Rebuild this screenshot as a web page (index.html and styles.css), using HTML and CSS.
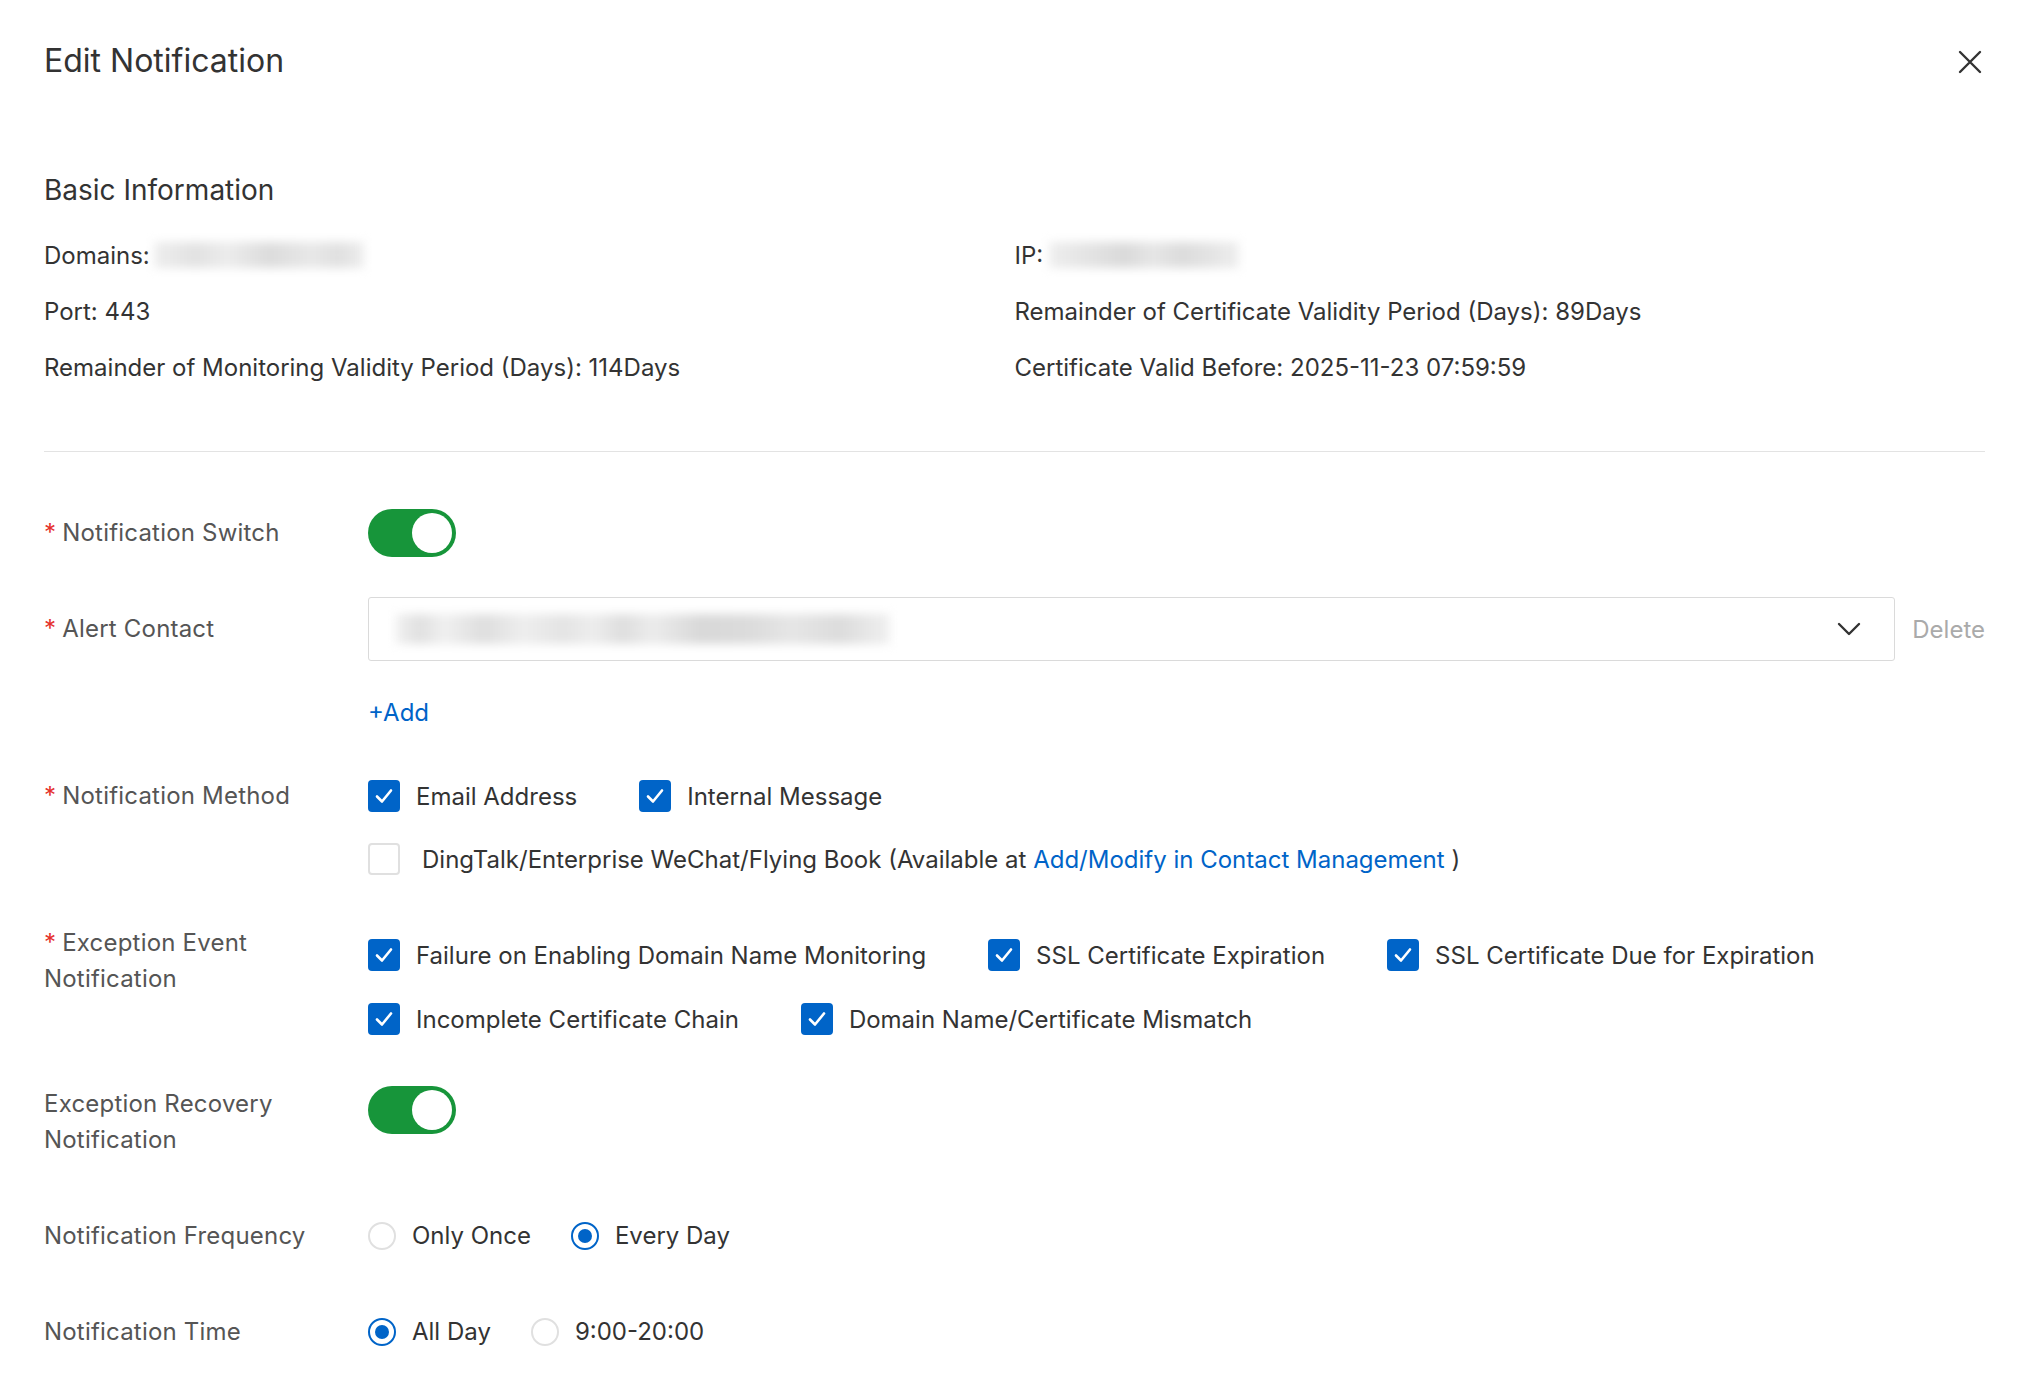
FILE: index.html
```html
<!DOCTYPE html>
<html lang="en">
<head>
<meta charset="utf-8">
<title>Edit Notification</title>
<link rel="stylesheet" href="styles.css">
</head>
<body>
<div class="dialog">
  <header class="head">
    <h1 class="title">Edit Notification</h1>
    <button class="close" type="button" aria-label="Close">
      <svg width="24" height="24" viewBox="0 0 24 24"><path d="M2 2 L22 22 M22 2 L2 22" stroke="#333" stroke-width="2.4" fill="none" stroke-linecap="round"/></svg>
    </button>
  </header>

  <h2 class="section">Basic Information</h2>
  <div class="info">
    <div class="info-item">Domains:<span class="blur blur-domain"></span></div>
    <div class="info-item">IP:<span class="blur blur-ip"></span></div>
    <div class="info-item">Port: 443</div>
    <div class="info-item">Remainder of Certificate Validity Period (Days): 89Days</div>
    <div class="info-item">Remainder of Monitoring Validity Period (Days): 114Days</div>
    <div class="info-item">Certificate Valid Before: 2025-11-23 07:59:59</div>
  </div>
  <hr class="divider">

  <div class="form">
    <div class="row row-switch">
      <div class="label"><span class="star">*</span>Notification Switch</div>
      <div class="control"><span class="switch"><span class="knob"></span></span></div>
    </div>

    <div class="row row-contact">
      <div class="label label-tall"><span class="star">*</span>Alert Contact</div>
      <div class="control control-contact">
        <div class="select">
          <span class="blur blur-contact"></span>
          <svg class="chev" width="24" height="14" viewBox="0 0 24 14"><path d="M2 2 L12 12 L22 2" stroke="#333" stroke-width="2.4" fill="none" stroke-linecap="round" stroke-linejoin="round"/></svg>
        </div>
        <span class="delete">Delete</span>
      </div>
    </div>

    <div class="row row-add">
      <div class="label"></div>
      <div class="control"><span class="link">+Add</span></div>
    </div>

    <div class="row row-method">
      <div class="label"><span class="star">*</span>Notification Method</div>
      <div class="control control-stack">
        <div class="opt-line">
          <span class="opt"><span class="cb on"><svg width="32" height="32" viewBox="0 0 32 32"><path d="M9 16.5 L14 21.5 L23 10.5" stroke="#fff" stroke-width="2.6" fill="none" stroke-linecap="round" stroke-linejoin="round"/></svg></span><span>Email Address</span></span>
          <span class="opt"><span class="cb on"><svg width="32" height="32" viewBox="0 0 32 32"><path d="M9 16.5 L14 21.5 L23 10.5" stroke="#fff" stroke-width="2.6" fill="none" stroke-linecap="round" stroke-linejoin="round"/></svg></span><span>Internal Message</span></span>
        </div>
        <div class="opt-line">
          <span class="opt opt-wide"><span class="cb"></span><span>DingTalk/Enterprise WeChat/Flying Book (Available at <span class="link">Add/Modify in Contact Management</span> )</span></span>
        </div>
      </div>
    </div>

    <div class="row row-exception">
      <div class="label label-multi"><span class="star">*</span>Exception Event<br>Notification</div>
      <div class="control control-stack control-exc">
        <div class="opt-line">
          <span class="opt"><span class="cb on"><svg width="32" height="32" viewBox="0 0 32 32"><path d="M9 16.5 L14 21.5 L23 10.5" stroke="#fff" stroke-width="2.6" fill="none" stroke-linecap="round" stroke-linejoin="round"/></svg></span><span>Failure on Enabling Domain Name Monitoring</span></span>
          <span class="opt"><span class="cb on"><svg width="32" height="32" viewBox="0 0 32 32"><path d="M9 16.5 L14 21.5 L23 10.5" stroke="#fff" stroke-width="2.6" fill="none" stroke-linecap="round" stroke-linejoin="round"/></svg></span><span>SSL Certificate Expiration</span></span>
          <span class="opt"><span class="cb on"><svg width="32" height="32" viewBox="0 0 32 32"><path d="M9 16.5 L14 21.5 L23 10.5" stroke="#fff" stroke-width="2.6" fill="none" stroke-linecap="round" stroke-linejoin="round"/></svg></span><span>SSL Certificate Due for Expiration</span></span>
        </div>
        <div class="opt-line">
          <span class="opt"><span class="cb on"><svg width="32" height="32" viewBox="0 0 32 32"><path d="M9 16.5 L14 21.5 L23 10.5" stroke="#fff" stroke-width="2.6" fill="none" stroke-linecap="round" stroke-linejoin="round"/></svg></span><span>Incomplete Certificate Chain</span></span>
          <span class="opt"><span class="cb on"><svg width="32" height="32" viewBox="0 0 32 32"><path d="M9 16.5 L14 21.5 L23 10.5" stroke="#fff" stroke-width="2.6" fill="none" stroke-linecap="round" stroke-linejoin="round"/></svg></span><span>Domain Name/Certificate Mismatch</span></span>
        </div>
      </div>
    </div>

    <div class="row row-recovery">
      <div class="label label-multi">Exception Recovery<br>Notification</div>
      <div class="control"><span class="switch"><span class="knob"></span></span></div>
    </div>

    <div class="row row-freq">
      <div class="label">Notification Frequency</div>
      <div class="control">
        <span class="ropt"><span class="radio"></span><span>Only Once</span></span>
        <span class="ropt"><span class="radio on"></span><span>Every Day</span></span>
      </div>
    </div>

    <div class="row row-time">
      <div class="label">Notification Time</div>
      <div class="control">
        <span class="ropt"><span class="radio on"></span><span>All Day</span></span>
        <span class="ropt"><span class="radio"></span><span>9:00-20:00</span></span>
      </div>
    </div>
  </div>
</div>
</body>
</html>
```

FILE: styles.css
```css
* { box-sizing: border-box; }
html, body { margin: 0; padding: 0; background: #fff; }
body {
  font-family: Inter, "Noto Sans", "Liberation Sans", sans-serif;
  color: #333;
  font-size: 24px;
}
.dialog { padding: 0 47px 0 44px; }

.head {
  height: 120px;
  display: flex;
  align-items: center;
  justify-content: space-between;
}
.title { margin: 0; font-size: 32px; font-weight: 400; color: #333; }
.close {
  width: 24px; height: 24px; padding: 0; margin: 4px 3px 0 0;
  border: 0; background: none; display: flex;
}

.section {
  margin: 42px 0 0;
  height: 56px; line-height: 56px;
  font-size: 28px; font-weight: 400; color: #333;
}
.info {
  margin-top: 9px;
  display: grid;
  grid-template-columns: 1fr 1fr;
  grid-auto-rows: 56px;
  align-items: center;
}
.info-item { display: flex; align-items: center; white-space: nowrap; }

.blur {
  display: inline-block;
  filter: blur(5px);
}
.blur-domain {
  width: 210px; height: 26px; margin-left: 4px;
  background: linear-gradient(90deg, #eee 0%, #e2e2e2 20%, #ececec 35%, #dcdcdc 55%, #e8e8e8 75%, #e0e0e0 88%, #eee 100%);
}
.blur-ip {
  width: 190px; height: 26px; margin-left: 6px;
  background: linear-gradient(90deg, #eee 0%, #e4e4e4 20%, #dadada 40%, #e6e6e6 55%, #dcdcdc 70%, #e4e4e4 85%, #eee 100%);
}
.blur-contact {
  width: 495px; height: 30px;
  background: linear-gradient(90deg, #f2f2f2 0%, #e0e0e0 5%, #f0f0f0 10%, #dedede 18%, #eee 26%, #e4e4e4 34%, #ededed 40%, #dedede 46%, #ececec 52%, #d8d8d8 62%, #dcdcdc 72%, #e6e6e6 80%, #dcdcdc 90%, #f0f0f0 100%);
}

.divider {
  margin: 56px 0 0;
  border: 0; border-top: 1px solid #e3e3e3; height: 0;
}

.form { padding-top: 57px; }
.row { display: flex; }
.label {
  width: 324px; flex: none;
  color: #555;
  line-height: 48px;
  white-space: nowrap;
  letter-spacing: 0.2px;
}
.label-tall { line-height: 64px; }
.label-multi { line-height: 36px; }
.star { color: #e5322d; margin-right: 6px; }
.control { flex: 1; display: flex; align-items: center; min-width: 0; }

.row-contact { margin-top: 40px; }
.row-add { margin-top: 36px; }
.row-add .label, .row-add .control { line-height: 32px; height: 32px; }
.row-method { margin-top: 43px; }
.row-exception { margin-top: 42px; }
.row-recovery { margin-top: 43px; }
.row-freq { margin-top: 54px; }
.row-time { margin-top: 48px; }

.switch {
  position: relative;
  width: 88px; height: 48px;
  border-radius: 24px;
  background: #17953a;
  display: inline-block;
}
.knob {
  position: absolute;
  right: 4px; top: 4px;
  width: 40px; height: 40px;
  border-radius: 50%;
  background: #fff;
}
.row-recovery .control { align-items: flex-start; }

.control-contact { gap: 17px; }
.select {
  flex: 1;
  height: 64px;
  border: 1px solid #dadada;
  border-radius: 3px;
  display: flex;
  align-items: center;
  justify-content: space-between;
  padding: 0 33px 0 26px;
}
.chev { display: block; }
.delete { color: #aaa; }

.link { color: #0064c8; }

.control-stack { flex-direction: column; align-items: flex-start; gap: 15px; }
.control-exc { padding-top: 6px; gap: 16px; }
.opt-line { display: flex; align-items: center; height: 48px; }
.opt {
  display: inline-flex; align-items: center;
  gap: 16px; margin-right: 62px;
  color: #333; white-space: nowrap;
}
.opt-wide { gap: 22px; }
.cb {
  width: 32px; height: 32px; flex: none;
  border-radius: 4px;
  border: 2px solid #e0e0e0;
  background: #fff;
  display: inline-flex;
}
.cb.on { background: #0064c8; border: 0; }
.cb svg { display: block; }

.ropt {
  display: inline-flex; align-items: center;
  gap: 16px; margin-right: 40px;
  color: #333; line-height: 48px;
}
.radio {
  width: 28px; height: 28px; flex: none;
  border-radius: 50%;
  border: 2px solid #e0e0e0;
  background: #fff;
  display: inline-flex; align-items: center; justify-content: center;
}
.radio.on { border-color: #0064c8; }
.radio.on::after {
  content: "";
  width: 14px; height: 14px;
  border-radius: 50%;
  background: #0064c8;
}
```
